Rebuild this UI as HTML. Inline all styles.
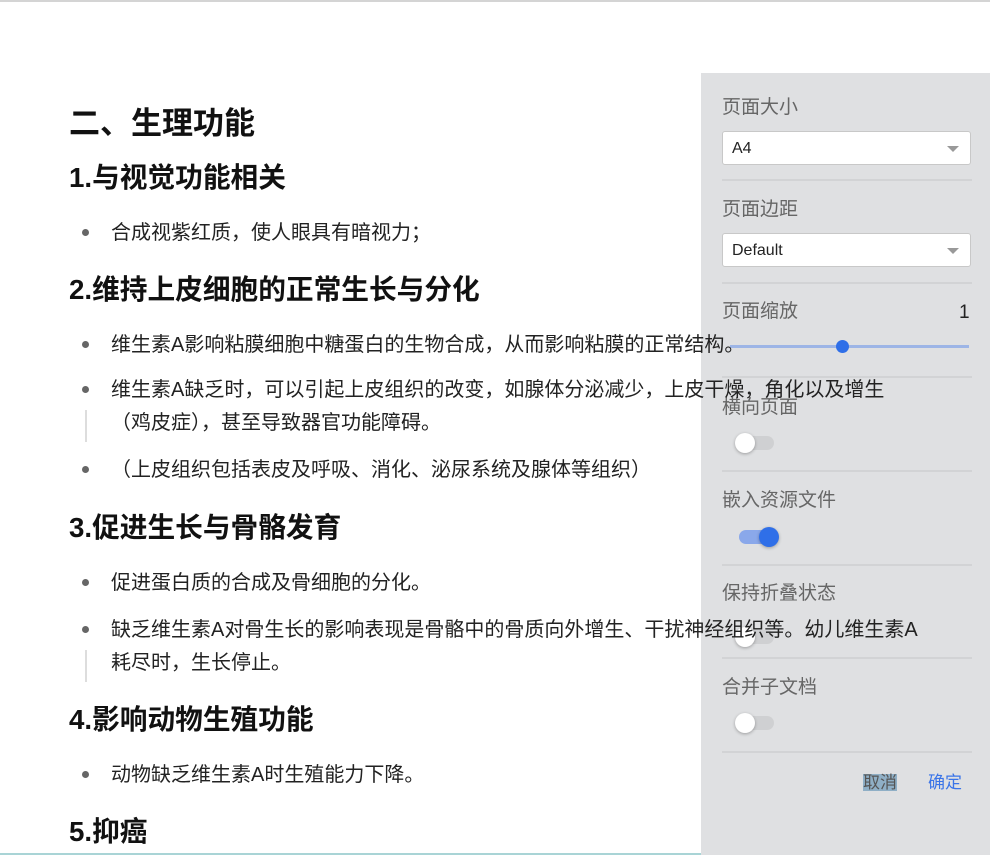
<!DOCTYPE html>
<html><head><meta charset="utf-8"><style>
*{margin:0;padding:0;box-sizing:border-box}
body{width:990px;height:855px;overflow:hidden;background:#fff;position:relative;font-family:"Liberation Sans","Noto Sans CJK SC",sans-serif}
.a{position:absolute;white-space:nowrap;line-height:1}
.t{z-index:5;color:#111}
.h1{font-size:31px;font-weight:bold}
.h2{font-size:27.7px;font-weight:bold}
.p{font-size:20px;color:#222;margin-top:2px}
.dot{position:absolute;width:7px;height:7px;border-radius:50%;background:#666;z-index:5}
.bar{position:absolute;left:85px;width:2px;background:#ddd;z-index:5}
#panel{position:absolute;left:701px;top:73px;width:289px;height:782px;background:#dfe0e2}
.lab{font-size:19px;color:#666}
.sel{position:absolute;left:722px;width:249px;height:34px;background:#fff;border:1px solid #c8c8c8;border-radius:3px;font-size:16px;color:#222;padding:8px 0 0 9px}
.sel:after{content:"";position:absolute;right:11px;top:14px;border-left:6px solid transparent;border-right:6px solid transparent;border-top:6px solid #999}
.div{position:absolute;left:722px;width:250px;height:2px;background:#d2d3d5}
.tr{position:absolute;width:38px;height:14px;border-radius:7px;background:#cfd0d2}
.kn{position:absolute;width:20px;height:20px;border-radius:50%;background:#fff;box-shadow:0 1px 3px rgba(0,0,0,.3)}
</style></head><body>
<div style="position:absolute;left:0;top:0;width:990px;height:2px;background:#d4d4d4"></div>
<div style="position:absolute;left:0;top:853px;width:990px;height:2px;background:#a9d4d6"></div>
<div id="panel"></div>
<div class="a lab" style="left:722px;top:98px">页面大小</div>
<div class="sel" style="top:131px">A4</div>
<div class="div" style="top:179px"></div>
<div class="a lab" style="left:722px;top:200px">页面边距</div>
<div class="sel" style="top:233px">Default</div>
<div class="div" style="top:282px"></div>
<div class="a lab" style="left:722px;top:302px">页面缩放</div>
<div class="a" style="left:959px;top:303px;font-size:19px;color:#222">1</div>
<div style="position:absolute;left:730px;top:345px;width:239px;height:3px;background:#9db5e6"></div>
<div style="position:absolute;left:836px;top:340px;width:13px;height:13px;border-radius:50%;background:#2f6fe8"></div>
<div class="div" style="top:376px"></div>
<div class="a lab" style="left:722px;top:398px">横向页面</div>
<div class="tr" style="left:736px;top:436px"></div><div class="kn" style="left:735px;top:433px"></div>
<div class="div" style="top:470px"></div>
<div class="a lab" style="left:722px;top:491px">嵌入资源文件</div>
<div class="tr" style="left:739px;top:530px;background:#8aa8ea"></div><div class="kn" style="left:759px;top:527px;background:#2f6fe8"></div>
<div class="div" style="top:564px"></div>
<div class="a lab" style="left:722px;top:584px">保持折叠状态</div>
<div class="tr" style="left:736px;top:630px"></div><div class="kn" style="left:735px;top:627px"></div>
<div class="div" style="top:657px"></div>
<div class="a lab" style="left:722px;top:678px">合并子文档</div>
<div class="tr" style="left:736px;top:716px"></div><div class="kn" style="left:735px;top:713px"></div>
<div class="div" style="top:751px"></div>
<div class="a" style="left:863px;top:774px;font-size:17px;color:#555;background:#8fafc6">取消</div>
<div class="a" style="left:928px;top:774px;font-size:17px;color:#3a74e8">确定</div>

<div class="a t h1" style="left:69px;top:108px">二、生理功能</div>
<div class="a t h2" style="left:69px;top:164px">1.与视觉功能相关</div>
<div class="dot" style="left:82px;top:229px"></div><div class="a t p" style="left:111px;top:221px">合成视紫红质，使人眼具有暗视力；</div>
<div class="a t h2" style="left:69px;top:276px">2.维持上皮细胞的正常生长与分化</div>
<div class="dot" style="left:82px;top:341px"></div><div class="a t p" style="left:111px;top:333px">维生素A影响粘膜细胞中糖蛋白的生物合成，从而影响粘膜的正常结构。</div>
<div class="dot" style="left:82px;top:386px"></div><div class="a t p" style="left:111px;top:378px">维生素A缺乏时，可以引起上皮组织的改变，如腺体分泌减少，上皮干燥，角化以及增生</div>
<div class="bar" style="top:410px;height:32px"></div>
<div class="a t p" style="left:111px;top:411px">（鸡皮症），甚至导致器官功能障碍。</div>
<div class="dot" style="left:82px;top:466px"></div><div class="a t p" style="left:111px;top:458px">（上皮组织包括表皮及呼吸、消化、泌尿系统及腺体等组织）</div>
<div class="a t h2" style="left:69px;top:514px">3.促进生长与骨骼发育</div>
<div class="dot" style="left:82px;top:579px"></div><div class="a t p" style="left:111px;top:571px">促进蛋白质的合成及骨细胞的分化。</div>
<div class="dot" style="left:82px;top:626px"></div><div class="a t p" style="left:111px;top:618px">缺乏维生素A对骨生长的影响表现是骨骼中的骨质向外增生、干扰神经组织等。幼儿维生素A</div>
<div class="bar" style="top:650px;height:32px"></div>
<div class="a t p" style="left:111px;top:651px">耗尽时，生长停止。</div>
<div class="a t h2" style="left:69px;top:706px">4.影响动物生殖功能</div>
<div class="dot" style="left:82px;top:771px"></div><div class="a t p" style="left:111px;top:763px">动物缺乏维生素A时生殖能力下降。</div>
<div class="a t h2" style="left:69px;top:818px">5.抑癌</div>
</body></html>
